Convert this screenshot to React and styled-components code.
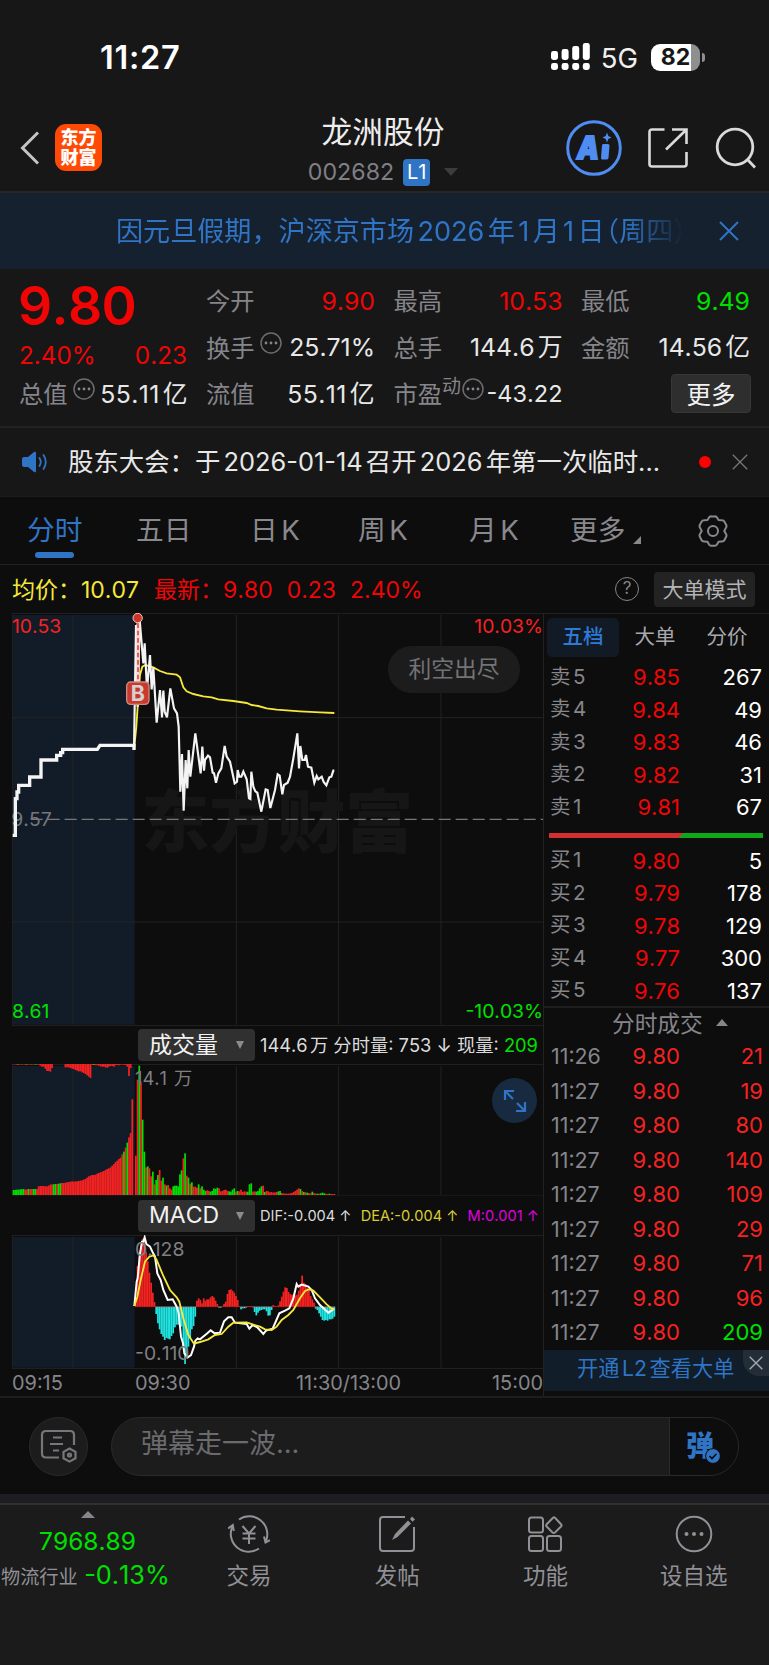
import styled, { createGlobalStyle } from "styled-components";

const RED = "#f00505";
const GREEN = "#00e000";
const BLUE = "#2f74c5";
const GREY = "#85858b";
const BAR_RED = "#f52222";
const CYAN = "#1fe3e0";

// all three charts share one x axis: 3 units per pixel, 36 = left edge
const AXIS_X = [219, 709, 1016, 1323];
const MINUTE = 5.09;

const priceLine = "38,706 46,706 46,596 51,596 51,576 56,576 56,556 89,556 89,531 123,531 123,480 170,480 170,466 182,466 182,458 188,458 188,448 292,448 300,436 402,436 402,450";
const tradeLine = "402,450 408,75 413,320 419,60 430,190 434,130 441,268 450,165 455,268 460,203 470,368 480,270 486,352 490,272 494,335 501,352 511,265 522,325 531,340 536,380 541,575 546,462 551,632 557,480 562,565 566,450 571,530 586,400 602,520 607,440 612,512 615,480 624,467 630,472 638,518 642,520 648,548 655,520 664,505 674,438 680,470 690,485 704,550 711,545 713,510 718,530 724,530 730,515 740,538 747,595 751,597 754,515 760,560 766,574 772,578 784,635 797,568 803,570 811,624 825,570 833,523 839,527 847,583 852,555 863,548 870,530 880,475 892,400 897,505 901,438 907,480 914,480 918,465 924,500 934,503 943,548 950,528 955,538 965,530 971,546 979,556 988,532 994,530 1000,512 1003,512";
const averageLine = "402,450 409,380 413,320 420,225 427,200 436,195 460,202 480,213 500,220 530,224 540,232 550,262 560,274 580,282 610,289 635,292 655,298 700,303 740,309 755,315 775,318 800,325 830,329 900,334 960,337 1003,339";

const difLine = "403,738 410,665 413,655 420,580 426,545 430,545 434,532 439,552 450,560 457,575 465,590 472,640 482,660 490,690 503,720 518,718 530,740 536,760 543,830 549,850 553,880 563,892 573,885 582,860 586,842 593,835 600,838 622,820 632,811 644,820 660,818 672,784 685,772 695,772 705,788 740,792 748,806 758,795 772,802 790,822 798,812 818,806 838,760 855,752 868,745 880,715 890,672 895,680 905,674 925,680 935,690 945,715 960,735 985,758 1002,747";
const deaLine = "403,738 412,710 422,660 435,605 448,590 460,586 470,600 490,648 510,690 530,712 538,725 550,775 565,825 582,851 600,846 625,838 645,825 665,822 685,800 700,788 740,787 760,794 780,800 795,808 815,810 830,800 845,780 865,765 880,750 900,715 915,693 928,688 940,692 960,712 980,733 995,746 1003,747";

const auction = [15,15,16,16,17,17,18,16,17,18,18,18,18,18,18,26,27,27,27,26,26,28,31,32,32,33,33,34,35,36,36,37,38,39,40,41,40,41,41,42,43,44,46,48,52,56,58,60,60,61,64,66,68,70,72,75,78,80,83,88,93,99,103,108,112,122,130,142,157,173,186,287];
const auctionGreen = [0,1,2,3,4,5,6,9,12,13,24,25,27,28,66,68];
const unmatched = [1,1,2,2,1,2,1,2,2,1,2,2,1,2,2,2,5,8,8,14,21,21,23,12,0,0,0,0,0,0,0,10,10,10,12,14,15,18,20,22,22,25,27,30,34,38,42,3,3,4,4,5,7,8,8,10,11,8,6,6,8,4,3,4,2,2,2,3,8,36,12,0];

// minute volume, negative = green bar
const volume = [118,346,-388,340,-226,-130,83,-86,80,56,-70,32,-45,-60,75,43,-52,32,-28,30,20,16,-26,-28,-28,-26,-62,-74,110,-125,58,-52,34,-38,25,25,22,-32,20,-26,-16,-12,14,12,-10,-12,-20,-18,-22,20,11,12,15,16,12,-11,-10,-16,-20,10,-12,11,16,9,11,10,-10,-32,-35,10,11,-10,-12,-20,-26,28,-9,12,11,8,9,7,8,9,-11,-12,6,5,4,4,4,5,6,9,12,16,20,-18,12,-9,8,-7,6,5,-10,6,4,-4,4,-5,-7,-5,4,3,-4,3,3,3];

const macd = [20,122,150,180,203,200,165,136,102,72,42,14,-22,-50,-68,-82,-90,-100,-94,-96,-98,-88,-80,-62,-54,-54,-54,-60,-118,-172,-150,-120,-95,-68,-58,-30,18,25,20,10,25,18,22,22,28,32,28,18,8,-3,-3,2,8,15,38,50,52,48,42,32,20,2,-8,-5,-5,-3,2,2,2,-2,-16,-26,-18,-12,-10,-8,-8,-14,-27,-26,-10,5,2,1,4,16,30,45,58,56,44,38,36,34,34,36,48,68,93,72,68,56,48,32,22,12,-6,-10,-20,-30,-40,-42,-40,-42,-38,-38,-36,-30,-18,-8];

const sells = [["卖5", "9.85", "267"], ["卖4", "9.84", "49"], ["卖3", "9.83", "46"], ["卖2", "9.82", "31"], ["卖1", "9.81", "67"]];
const buys = [["买1", "9.80", "5"], ["买2", "9.79", "178"], ["买3", "9.78", "129"], ["买4", "9.77", "300"], ["买5", "9.76", "137"]];
const trades = [["11:26", "21"], ["11:27", "19"], ["11:27", "80"], ["11:27", "140"], ["11:27", "109"], ["11:27", "29"], ["11:27", "71"], ["11:27", "96"], ["11:27", "209"]];

export default function App() {
    return (
        <>
            <GlobalStyle />
            <Screen>
                <StatusBar />
                <Header />
                <Banner>
                    <BannerText>因元旦假期，沪深京市场2026年1月1日<Bracket>（</Bracket>周四）</BannerText>
                    <Cross size={20} color={BLUE} width={2} />
                </Banner>
                <Quote />
                <News>
                    <Speaker />
                    <NewsText>股东大会：于2026-01-14召开2026年第一次临时...</NewsText>
                    <RedDot />
                    <Cross size={16} color="#77777c" width={1.6} />
                </News>
                <Tabs />
                <Summary />
                <Market>
                    <Charts />
                    <OrderBook />
                </Market>
                <CommentBar />
                <BottomNav />
            </Screen>
        </>
    )
}

function StatusBar() {
    return (
        <Status>
            <Clock>11:27</Clock>
            <StatusRight>
                <svg width="39" height="28" viewBox="0 0 39 28" fill="#fff">
                    {[8, 6, 3, 0].map((y, i) => (
                        <g key={i}>
                            <rect x={i * 10.6} y={y} width="7" height={17 - y} rx="2.4" />
                            <rect x={i * 10.6} y="20" width="7" height="7" rx="2.4" />
                        </g>
                    ))}
                </svg>
                <Network>5G</Network>
                <Battery><b>82</b></Battery>
                <BatteryTip />
            </StatusRight>
        </Status>
    )
}

function Header() {
    return (
        <Top>
            <TopSide>
                <svg width="20" height="34" viewBox="0 0 20 34" fill="none" stroke="#c4c4c6" strokeWidth="3">
                    <path d="M18 1.5 2.5 17 18 32.5" />
                </svg>
                <Logo><span>东方</span><span>财富</span></Logo>
            </TopSide>
            <TitleBlock>
                <h1>龙洲股份</h1>
                <Code>
                    002682 <Level>L1</Level>
                    <svg width="14" height="8"><path d="M0 0h14L7 8z" fill="#3c3c3e" /></svg>
                </Code>
            </TitleBlock>
            <TopSide $end>
                <svg width="56" height="56" viewBox="0 0 56 56">
                    <circle cx="28" cy="28" r="26.3" fill="none" stroke="#4f8df2" strokeWidth="3" />
                    <text x="11" y="38.5" fill="#4f8df2" stroke="#4f8df2" strokeWidth="1.8" fontFamily="Inter" fontWeight="900" fontSize="31" fontStyle="italic" textLength="22" lengthAdjust="spacingAndGlyphs">A</text>
                    <path d="M37.5 25.5h4.500L41 38H36.500z" fill="#4f8df2" stroke="#4f8df2" strokeWidth="3" strokeLinejoin="round" />
                    <path d="M41 12.500 42.300 16l3.200 1.500-3.200 1.500-1.300 3.500-1.300-3.500-3.200-1.500 3.200-1.500z" fill="#4f8df2" />
                </svg>
                <svg width="42" height="42" viewBox="0 0 42 42" fill="none" stroke="#dadada" strokeWidth="2.6">
                    <path d="M17.500 2.500H5Q2.500 2.500 2.500 5v32Q2.500 39.500 5 39.500h32Q39.500 39.500 39.500 37V25M25 2.500h14.500V17M39 3 19 22.500" />
                </svg>
                <svg width="42" height="42" viewBox="0 0 42 42" fill="none" stroke="#dadada" strokeWidth="2.8">
                    <circle cx="21" cy="20" r="17.800" />
                    <path d="m33 32 8 8.500" />
                </svg>
            </TopSide>
        </Top>
    )
}

function Quote() {
    return (
        <QuoteBox>
            <PriceColumn>
                <Price>9.80</Price>
                <Change><span>2.40%</span><span>0.23</span></Change>
                <Cell><label>总值</label><Dots /><Value $wide>55.11亿</Value></Cell>
            </PriceColumn>
            <Cells>
                <Cell><label>今开</label><Value $color={RED}>9.90</Value></Cell>
                <Cell><label>最高</label><Value $color={RED}>10.53</Value></Cell>
                <Cell><label>最低</label><Value $color={GREEN}>9.49</Value></Cell>
                <Cell><label>换手</label><Dots /><Value>25.71%</Value></Cell>
                <Cell><label>总手</label><Value>144.6万</Value></Cell>
                <Cell><label>金额</label><Value>14.56亿</Value></Cell>
                <Cell><label>流值</label><Value $wide>55.11亿</Value></Cell>
                <Cell><label>市盈</label><Sup>动</Sup><Dots $tight /><Value $small>-43.22</Value></Cell>
                <Cell><MoreButton>更多</MoreButton></Cell>
            </Cells>
        </QuoteBox>
    )
}

function Dots({ $tight }) {
    return (
        <DotsIcon $tight={$tight} viewBox="0 0 22 22">
            <circle cx="11" cy="11" r="10" fill="none" stroke="#6c6c70" strokeWidth="1.500" />
            <g fill="#85858b"><circle cx="6" cy="11" r="1.400" /><circle cx="11" cy="11" r="1.400" /><circle cx="16" cy="11" r="1.400" /></g>
        </DotsIcon>
    )
}

function Cross({ size, color, width }) {
    return (
        <svg width={size} height={size} viewBox="0 0 20 20" stroke={color} strokeWidth={width}>
            <path d="m1 1 18 18M19 1 1 19" />
        </svg>
    )
}

function Speaker() {
    return (
        <svg width="26" height="22" viewBox="0 0 26 22" fill="none" stroke={BLUE} strokeWidth="1.800" strokeLinecap="round">
            <path d="M0 8Q0 6 2 6h4l6-5q2-1 2 1v18q0 2-2 1l-6-5H2q-2 0-2-2z" fill={BLUE} stroke="none" />
            <path d="M17.500 7q2.500 4 0 8M21.500 4q4.500 7 0 14" />
        </svg>
    )
}

function Tabs() {
    return (
        <TabBar>
            <Tab $active>分时</Tab>
            <Tab>五日</Tab>
            <Tab>日K</Tab>
            <Tab>周K</Tab>
            <Tab>月K</Tab>
            <Tab>更多<Corner /></Tab>
            <svg width="32" height="32" viewBox="0 0 32 32" fill="none" stroke="#88888e" strokeWidth="2" strokeLinejoin="round">
                <path d="M12 2.500q1-1.500 2.500-1h3q1.500-.5 2.500 1l1.500 2.500 3.500.2q1.800 0 2.500 1.600l1.500 2.800q1 1.600 0 3L27.300 16l1.700 3q1 1.500 0 3l-1.500 3q-.7 1.500-2.500 1.500l-3.500.2L20 29.500q-1 1.500-2.500 1.200h-3q-1.500.3-2.500-1.200l-1.500-2.800-3.500-.2q-1.800 0-2.500-1.500L3 22q-1-1.500 0-3l1.700-3L3 12.600q-1-1.400 0-3l1.500-2.800Q5.200 5.200 7 5.200L10.500 5z" />
                <circle cx="16" cy="16" r="5" />
            </svg>
        </TabBar>
    )
}

function Summary() {
    return (
        <SummaryRow>
            <Stat $color="#f5e83a">均价：<b>10.07</b></Stat>
            <Stat $color={RED}>最新：<b>9.80</b><b>0.23</b><b>2.40%</b></Stat>
            <Help>?</Help>
            <ModeButton>大单模式</ModeButton>
        </SummaryRow>
    )
}

function Grid({ top, bottom, rows = [] }) {
    return (
        <>
            <rect x="38" y={top + 6} width="366" height={bottom - top - 10} fill="#121c28" />
            <g stroke="#232323" strokeWidth="3">
                {AXIS_X.map((x) => <path key={x} d={`M${x} ${top + 6}V${bottom - 4}`} />)}
                {rows.map((y) => <path key={y} d={`M36 ${y}H1629`} />)}
                <path d={`M37 ${top}V${bottom}M36 ${top + 1}H1629M36 ${bottom - 1}H1629`} />
            </g>
        </>
    )
}

function Charts() {
    return (
        <ChartColumn>
            <ChartArea>
                <Plot $height={413} viewBox="36 39 1593 1239">
                    <Grid top={39} bottom={1278} rows={[353, 966]} />
                    <PlotText x="424" y="740" $size={204} $color="#161616" fontWeight="900" textLength="816">东方财富</PlotText>
                    <path d="M92 658H1629" stroke="#77777b" strokeWidth="3.500" strokeDasharray="36 15" />
                    <PlotText x="34" y="677" $color="#77777b">9.57</PlotText>
                    <polyline points={averageLine} fill="none" stroke="#f5e83a" strokeWidth="5.500" />
                    <polyline points={priceLine} fill="none" stroke="#f4f4f4" strokeWidth="10" />
                    <polyline points={tradeLine} fill="none" stroke="#f4f4f4" strokeWidth="6.500" />
                    <PlotText x="36" y="98">10.53</PlotText>
                    <PlotText x="1629" y="98" textAnchor="end">10.03%</PlotText>
                    <PlotText x="36" y="1253" $color={GREEN}>8.61</PlotText>
                    <PlotText x="1629" y="1253" textAnchor="end" $color={GREEN}>-10.03%</PlotText>
                    <path d="M414 70V246" stroke="#f2dada" strokeWidth="10" />
                    <path d="M414 70V246" stroke="#ef5b50" strokeWidth="6" strokeDasharray="14 8" />
                    <circle cx="413" cy="54" r="14" fill="#cf3325" stroke="#e8c9c6" strokeWidth="3" />
                    <rect x="380" y="246" width="67" height="67" rx="12" fill="#c93a2d" stroke="#cf8b84" strokeWidth="4" />
                    <PlotText x="413.500" y="302" textAnchor="middle" $color="#d6d0d0" $size={64} fontWeight="700">B</PlotText>
                </Plot>
                <Hint>利空出尽</Hint>
            </ChartArea>
            <IndicatorRow $height={38}>
                <Picker>成交量<Arrow /></Picker>
                <Figures>
                    <span>144.6万 分时量: 753 ↓ 现量: <Up>209</Up></span>
                </Figures>
            </IndicatorRow>
            <ChartArea>
                <Plot $height={132} viewBox="36 12 1593 396">
                    <Grid top={12} bottom={409} />
                    {auction.map((h, i) => (
                        <g key={i}>
                            <rect x={38 + i * 5.02} y={405 - h} width="5.200" height={h} fill={auctionGreen.includes(i) ? GREEN : BAR_RED} />
                            <rect x={38 + i * 5.02} y="12" width="5.200" height={unmatched[i]} fill={i % 5 === 3 && unmatched[i] < 4 ? GREEN : BAR_RED} />
                        </g>
                    ))}
                    {volume.map((v, i) => (
                        <rect key={i} x={405 + i * MINUTE} y={405 - Math.abs(v)} width="5.200" height={Math.abs(v)} fill={v < 0 ? GREEN : BAR_RED} />
                    ))}
                    <PlotText x="405" y="76" $size={55} $color="#7f7f84">14.1万</PlotText>
                </Plot>
                <Expand>
                    <svg width="24" height="24" viewBox="0 0 24 24" fill="none" stroke={BLUE} strokeWidth="2.200">
                        <path d="M2 11V2h9M2 2l8 8M22 13v9h-9M22 22l-8-8" />
                    </svg>
                </Expand>
            </ChartArea>
            <IndicatorRow $height={39}>
                <Picker>MACD<Arrow /></Picker>
                <Figures $small>
                    <span>DIF:-0.004 ↑</span>
                    <Dea>DEA:-0.004 ↑</Dea>
                    <Hist>M:0.001 ↑</Hist>
                </Figures>
            </IndicatorRow>
            <Plot $height={134} viewBox="36 525 1593 402">
                <Grid top={525} bottom={927} />
                {macd.slice(0, 118).map((v, i) => (
                    <rect key={i} x={405 + i * MINUTE} y={v > 0 ? 740 - v : 740} width="5.200" height={Math.abs(v)} fill={v > 0 ? BAR_RED : CYAN} />
                ))}
                <path d="M405 740H1005" stroke={BAR_RED} strokeWidth="1.500" />
                <polyline points={difLine} fill="none" stroke="#fff" strokeWidth="6" />
                <polyline points={deaLine} fill="none" stroke="#f5e83a" strokeWidth="5.500" />
                <PlotText x="405" y="589" $color="#7f7f84">0.128</PlotText>
                <PlotText x="405" y="900" $color="#7f7f84">-0.110</PlotText>
            </Plot>
            <TimeAxis>
                <span>09:15</span>
                <span>09:30</span>
                <span>11:30/13:00</span>
                <span>15:00</span>
            </TimeAxis>
        </ChartColumn>
    )
}

function OrderBook() {
    return (
        <Book>
            <BookTabs>
                <BookTab $active>五档</BookTab>
                <BookTab>大单</BookTab>
                <BookTab>分价</BookTab>
            </BookTabs>
            {sells.map(([name, price, count]) => (
                <Level5 key={name}><span>{name}</span><i>{price}</i><b>{count}</b></Level5>
            ))}
            <Ratio />
            {buys.map(([name, price, count]) => (
                <Level5 key={name}><span>{name}</span><i>{price}</i><b>{count}</b></Level5>
            ))}
            <TradesTitle>
                分时成交
                <svg width="12" height="7"><path d="M0 7h12L6 0z" fill="#85858b" /></svg>
            </TradesTitle>
            {trades.map(([time, count], i) => (
                <Trade key={i} $sell={i === 8}><span>{time}</span><i>9.80</i><b>{count}</b></Trade>
            ))}
            <Promo>
                开通L2查看大单
                <PromoClose><Cross size={14} color="#a5a9ae" width={2} /></PromoClose>
            </Promo>
        </Book>
    )
}

function CommentBar() {
    return (
        <Comment>
            <RoundButton>
                <svg width="38" height="34" viewBox="0 0 38 34" fill="none" stroke="#77777b" strokeWidth="2.200">
                    <path d="M19 28.500H6Q2 28.500 2 24.500V6Q2 2 6 2h24q4 0 4 4v10M13 8.500h9M10 15h13M13 21.500h6" />
                    <path d="m29.500 19.500 6 3.300v6.500l-6 3.300-6-3.300v-6.500z" />
                    <circle cx="29.500" cy="26" r="1.500" />
                </svg>
            </RoundButton>
            <Field>
                <Placeholder>弹幕走一波...</Placeholder>
                <Danmu>
                    <b>弹</b>
                    <svg width="16" height="16" viewBox="0 0 16 16">
                        <circle cx="8" cy="8" r="7.400" fill={BLUE} stroke="#0d0d0d" />
                        <path d="m4.500 8 2.500 2.600 4.500-4.800" fill="none" stroke="#0d0d0d" strokeWidth="1.600" />
                    </svg>
                </Danmu>
            </Field>
        </Comment>
    )
}

function BottomNav() {
    return (
        <Nav>
            <IndexItem>
                <svg width="14" height="7"><path d="M0 7h14L7 0z" fill="#85858b" /></svg>
                <strong>7968.89</strong>
                <p>物流行业 <em>-0.13%</em></p>
            </IndexItem>
            <NavItem>
                <svg width="42" height="38" viewBox="0 0 42 38" fill="none" stroke="#909096" strokeWidth="2">
                    <path d="M11 4.500A18 18 0 0 1 38 26M31 33.500A18 18 0 0 1 4.500 11M0 13.500l4.800-3.500 1 6M42 25l-4.500 2.500-1.500-6" />
                    <path d="m14.500 11 6.500 7.500 6.500-7.500M21 18.500V29M14.500 18.500h13M14.500 23.500h13" />
                </svg>
                交易
            </NavItem>
            <NavItem>
                <svg width="38" height="38" viewBox="0 0 38 38" fill="none" stroke="#909096" strokeWidth="2">
                    <path d="M27 2H5Q2 2 2 5v28q0 3 3 3h28q3 0 3-3V12" />
                    <path d="m14 25 3-6L30 5.500l3 3L19.500 22z" fill="#909096" stroke="none" />
                    <path d="m32 4 2-2.500 3 3-2.500 2.200z" fill="#909096" stroke="none" />
                </svg>
                发帖
            </NavItem>
            <NavItem>
                <svg width="36" height="38" viewBox="0 0 36 38" fill="none" stroke="#909096" strokeWidth="2">
                    <rect x="2" y="2.500" width="14" height="15" rx="2.500" />
                    <rect x="2" y="21" width="14" height="15" rx="2.500" />
                    <rect x="20" y="21" width="14" height="15" rx="2.500" />
                    <path d="m26 2.700-6.300 6.500q-1 1.200 0 2.300l5.800 6q1.300 1 2.500 0l6-6q1-1.100 0-2.300L28 2.700q-1-.8-2 0z" />
                </svg>
                功能
            </NavItem>
            <NavItem>
                <svg width="38" height="38" viewBox="0 0 38 38" fill="none" stroke="#909096" strokeWidth="2">
                    <circle cx="19" cy="19" r="17.300" />
                    <g fill="#909096" stroke="none"><circle cx="11.500" cy="19" r="2" /><circle cx="19" cy="19" r="2" /><circle cx="26.500" cy="19" r="2" /></g>
                </svg>
                设自选
            </NavItem>
        </Nav>
    )
}

const GlobalStyle = createGlobalStyle`
    * {
        box-sizing: border-box;
    }

    body {
        margin: 0;
        background: #0d0d0d;
        font-family: Inter, "Noto Sans CJK SC", sans-serif;
        font-kerning: none;
        text-autospace: normal;
    }

    svg {
        display: block;
        flex-shrink: 0;
    }

    h1, p {
        margin: 0;
    }
`

const Screen = styled.div`
    width: 769px;
    height: 1665px;
    overflow: hidden;
    display: flex;
    flex-direction: column;
    background: #0d0d0d;
    color: #e8e8e8;
    white-space: nowrap;

    > * {
        flex-shrink: 0;
    }
`

const Status = styled.div`
    height: 96px;
    padding: 18px 64px 0 100px;
    display: flex;
    align-items: center;
    justify-content: space-between;
    background: #171717;
`

const Clock = styled.div`
    font-size: 32.5px;
    font-weight: 600;
    letter-spacing: 0.7px;
    padding-top: 1px;
    color: #fff;
`

const StatusRight = styled.div`
    display: flex;
    align-items: center;
`

const Network = styled.div`
    margin: 2px 13px 0 11px;
    font-size: 27.5px;
    color: #f0f0f0;
`

const Battery = styled.div`
    width: 49px;
    height: 27px;
    border-radius: 9px;
    display: flex;
    align-items: center;
    justify-content: center;
    background: linear-gradient(90deg, #fff 82%, #8f8f8f 82%);
    color: #171717;

    b {
        font-size: 23px;
        font-weight: 700;
    }
`

const BatteryTip = styled.div`
    width: 3px;
    height: 9px;
    margin-left: 2px;
    border-radius: 0 3px 3px 0;
    background: #8f8f8f;
`

const Top = styled.header`
    height: 97px;
    padding: 0 13px 0 20px;
    display: grid;
    grid-template-columns: 1fr auto 1fr;
    align-items: center;
    background: #171717;
    border-bottom: 2px solid #262626;
`

const TopSide = styled.div`
    display: flex;
    align-items: center;
    gap: ${(props) => (props.$end ? "25px" : "15px")};
    justify-content: ${(props) => (props.$end ? "flex-end" : "flex-start")};
    padding-top: 8px;
`

const Logo = styled.div`
    width: 47px;
    height: 47px;
    border-radius: 11px;
    background: #ff4a05;
    color: #fff;
    display: flex;
    flex-direction: column;
    align-items: center;
    justify-content: center;

    span {
        font-size: 18px;
        line-height: 20px;
        font-weight: 900;
    }
`

const TitleBlock = styled.div`
    display: flex;
    flex-direction: column;
    align-items: center;
    padding: 10px 10px 0 0;

    h1 {
        font-size: 30.7px;
        line-height: 40px;
        font-weight: 400;
        color: #ededed;
    }
`

const Code = styled.div`
    display: flex;
    align-items: center;
    gap: 9px;
    height: 34px;
    padding-top: 7px;
    font-size: 23.2px;
    color: #7f7f85;

    svg {
        margin-left: 5px;
    }
`

const Level = styled.span`
    width: 27px;
    height: 27px;
    border-radius: 4px;
    display: flex;
    align-items: center;
    justify-content: center;
    background: ${BLUE};
    color: #fff;
    font-size: 20px;
`

const Banner = styled.div`
    height: 76px;
    padding: 0 30px 0 116px;
    display: flex;
    align-items: center;
    justify-content: space-between;
    background: #162130;
`

const BannerText = styled.div`
    width: 585px;
    padding-bottom: 4px;
    font-size: 27.1px;
    color: ${BLUE};
    mask-image: linear-gradient(90deg, #000 87%, transparent 97%);
`

const Bracket = styled.span`
    margin-left: 1px;
    font-feature-settings: "halt";
`

const QuoteBox = styled.section`
    height: 159px;
    padding: 9px 19px 0;
    display: flex;
    gap: 19px;
    background: #171717;
    border-bottom: 2px solid #222;
`

const PriceColumn = styled.div`
    width: 168px;
`

const Price = styled.div`
    height: 55px;
    margin-left: -1px;
    line-height: 55px;
    font-size: 53.5px;
    font-weight: 600;
    letter-spacing: -0.7px;
    color: ${RED};
`

const Change = styled.div`
    height: 38px;
    padding-top: 6px;
    display: flex;
    justify-content: space-between;
    align-items: center;
    font-size: 24.3px;
    color: ${RED};
`

const Cells = styled.div`
    flex: 1;
    display: grid;
    grid-template-columns: repeat(3, 168px);
    grid-auto-rows: 46.5px;
    column-gap: 19.5px;
`

const Cell = styled.div`
    height: 46.5px;
    display: flex;
    align-items: center;

    label {
        font-size: 24.3px;
        line-height: 34px;
        color: ${GREY};
    }
`

const Value = styled.span`
    margin: 0 -1px 0 auto;
    font-size: ${(props) => (props.$small ? "23.5px" : "24.8px")};
    line-height: 32px;
    padding-bottom: ${(props) => (props.$small ? "0" : "1px")};
    letter-spacing: ${(props) => (props.$wide ? "0.4px" : "0")};
    color: ${(props) => props.$color || "#e8e8e8"};
`

const DotsIcon = styled.svg`
    width: 22px;
    height: 22px;
    margin: 0 0 10px ${(props) => (props.$tight ? "1px" : "5px")};
`

const Sup = styled.sup`
    margin-bottom: 16px;
    font-size: 19px;
    line-height: 1;
    color: ${GREY};
`

const MoreButton = styled.button`
    width: 80px;
    height: 39px;
    margin: 0 -2px 2px auto;
    padding: 3px 0 0;
    border: 1px solid #373737;
    border-radius: 4px;
    background: #2e2e2e;
    color: #f2f2f2;
    font: inherit;
    font-size: 24.5px;
    line-height: 1;
`

const News = styled.div`
    height: 68px;
    padding: 0 21px 0 22px;
    display: flex;
    align-items: center;
    background: #171717;
`

const NewsText = styled.div`
    flex: 1;
    margin-left: 20px;
    padding-bottom: 4px;
    font-size: 25.4px;
`

const RedDot = styled.div`
    width: 12px;
    height: 12px;
    margin-right: 21px;
    border-radius: 50%;
    background: #f00;
`

const TabBar = styled.nav`
    height: 69px;
    padding-left: 27px;
    display: grid;
    grid-template-columns: 109px 114px 108px 111px 101px 127px 32px;
    align-items: center;
    border-top: 1px solid #1d1d1d;
    border-bottom: 1px solid #222;
`

const Tab = styled.div`
    position: relative;
    height: 67px;
    line-height: 66px;
    font-size: 27.7px;
    color: ${(props) => (props.$active ? BLUE : "#88888e")};

    &::after {
        content: "";
        display: ${(props) => (props.$active ? "block" : "none")};
        position: absolute;
        left: 8px;
        bottom: 6px;
        width: 39px;
        height: 6px;
        border-radius: 3px;
        background: ${BLUE};
    }
`

const Corner = styled.span`
    display: inline-block;
    margin-left: 8px;
    border-left: 8px solid transparent;
    border-bottom: 8px solid #88888e;
    vertical-align: -4px;
`

const SummaryRow = styled.div`
    height: 48px;
    padding: 0 14px 0 12px;
    display: flex;
    align-items: center;
`

const Stat = styled.div`
    display: flex;
    align-items: baseline;
    margin-right: 15px;
    padding-bottom: 3px;
    font-size: 23px;
    color: ${(props) => props.$color};

    b {
        font-weight: 400;
        margin-right: 14px;
    }

    b:last-child {
        margin-right: 0;
    }
`

const Help = styled.div`
    width: 24px;
    height: 24px;
    margin: 0 15px 0 auto;
    border: 1.5px solid #85858b;
    border-radius: 50%;
    font-size: 17px;
    line-height: 21px;
    text-align: center;
    color: #85858b;
`

const ModeButton = styled.button`
    width: 101px;
    height: 35px;
    padding: 0;
    border: 0;
    border-radius: 4px;
    background: #232323;
    color: #b4b4b6;
    font: inherit;
    font-size: 21px;
    line-height: 1;
`

const Market = styled.main`
    height: 785px;
    display: flex;
    border-bottom: 2px solid #1d1d1d;
`

const ChartColumn = styled.div`
    width: 544px;
    flex-shrink: 0;
    padding-left: 12px;
    border-right: 1px solid #222;
`

const ChartArea = styled.div`
    position: relative;
`

const Plot = styled.svg`
    width: 531px;
    height: ${(props) => props.$height}px;
`

const PlotText = styled.text`
    font-size: ${(props) => props.$size || 58}px;
    fill: ${(props) => props.$color || BAR_RED};
`

const Hint = styled.div`
    position: absolute;
    left: 376px;
    top: 33px;
    width: 132px;
    height: 47px;
    border-radius: 24px;
    background: #1c1c1c;
    color: #737377;
    font-size: 22.8px;
    line-height: 45px;
    text-align: center;
`

const Expand = styled.div`
    position: absolute;
    left: 480px;
    top: 14px;
    width: 45px;
    height: 45px;
    border-radius: 50%;
    display: flex;
    align-items: center;
    justify-content: center;
    background: #182a40;
`

const IndicatorRow = styled.div`
    height: ${(props) => props.$height}px;
    padding: 0 4px 0 126px;
    display: flex;
    align-items: center;
    gap: 5px;
`

const Picker = styled.div`
    width: 117px;
    height: 32px;
    padding: 0 11px;
    display: flex;
    align-items: center;
    justify-content: space-between;
    border-radius: 4px;
    background: #303030;
    color: #f2f2f2;
    font-size: 23px;
    line-height: 31px;
`

const Arrow = styled.span`
    border: 4.5px solid transparent;
    border-top: 8px solid #8c8c90;
    border-bottom: 0;
`

const Figures = styled.div`
    flex: 1;
    display: flex;
    justify-content: space-between;
    padding-bottom: ${(props) => (props.$small ? "0" : "3px")};
    font-size: ${(props) => (props.$small ? "14.6px" : "18.3px")};
    color: #dcdcdc;
`

const Up = styled.span`
    color: ${GREEN};
`

const Dea = styled.span`
    color: #d8ce34;
`

const Hist = styled.span`
    color: #e000e0;
`

const TimeAxis = styled.div`
    height: 26px;
    margin-top: 1px;
    display: grid;
    grid-template-columns: 123px 161px 1fr auto;
    align-items: center;
    font-size: 19.9px;
    color: ${GREY};
`

const Book = styled.aside`
    width: 225px;
    display: flex;
    flex-direction: column;
    border-top: 1px solid #222;
`

const BookTabs = styled.div`
    height: 47px;
    padding: 4px 6px 4px 3px;
    display: grid;
    grid-template-columns: repeat(3, 1fr);
`

const BookTab = styled.div`
    border-radius: 5px;
    background: ${(props) => (props.$active ? "#111a25" : "transparent")};
    color: ${(props) => (props.$active ? "#2f7ad6" : "#a8a8ac")};
    font-size: 20.5px;
    font-weight: ${(props) => (props.$active ? 500 : 400)};
    line-height: 38px;
    text-align: center;
`

const BookRow = styled.div`
    display: grid;
    grid-template-columns: 52px 78px 1fr;
    align-items: center;
    padding-left: 6px;
    font-size: 22px;

    span {
        color: ${GREY};
    }

    i {
        font-style: normal;
        text-align: right;
        color: ${RED};
    }

    b {
        font-weight: 400;
        text-align: right;
    }
`

const Level5 = styled(BookRow)`
    height: 32.5px;
    padding-right: 7px;

    span {
        font-size: 20.5px;
        line-height: 30px;
        padding-bottom: 1px;
    }

    b {
        color: #fff;
    }
`

const Ratio = styled.div`
    height: 5px;
    margin: 9px 6px 7px 5px;
    background: linear-gradient(135deg, #d23030 61.5%, #10a818 61.5%);
`

const TradesTitle = styled.div`
    height: 33px;
    margin-top: -1px;
    padding: 0 0 2px 68px;
    display: flex;
    align-items: center;
    gap: 13px;
    border-top: 2px solid #1e1e1e;
    font-size: 22.7px;
    color: ${GREY};
`

const Trade = styled(BookRow)`
    height: 34.5px;
    padding-right: 6px;

    span {
        padding-left: 1px;
        font-size: 21.4px;
    }

    i {
        color: ${BAR_RED};
    }

    b {
        color: ${(props) => (props.$sell ? GREEN : BAR_RED)};
    }
`

const Promo = styled.div`
    position: relative;
    height: 41px;
    padding-left: 33px;
    background: #111d29;
    color: ${BLUE};
    font-size: 21.2px;
    line-height: 37px;
`

const PromoClose = styled.div`
    position: absolute;
    right: 0;
    top: 0;
    width: 26px;
    height: 26px;
    border-bottom-left-radius: 16px;
    display: flex;
    align-items: center;
    justify-content: center;
    background: #232d38;
`

const Comment = styled.div`
    height: 96px;
    padding: 0 30px 0 29px;
    display: flex;
    align-items: center;
    gap: 23px;
`

const RoundButton = styled.div`
    width: 59px;
    height: 59px;
    border: 1px solid #2a2a2a;
    border-radius: 50%;
    display: flex;
    align-items: center;
    justify-content: center;
    background: #1c1c1c;
`

const Field = styled.div`
    flex: 1;
    height: 59px;
    border: 1px solid #2a2a2a;
    border-radius: 30px;
    overflow: hidden;
    display: flex;
    background: #1c1c1c;
`

const Placeholder = styled.div`
    flex: 1;
    padding-left: 29px;
    font-size: 27px;
    line-height: 52px;
    color: #6b6b6f;
`

const Danmu = styled.div`
    width: 69px;
    display: flex;
    align-items: center;
    padding-left: 16px;
    border-left: 1px solid #2a2a2a;
    background: #0d0d0d;
    color: ${BLUE};

    b {
        font-size: 28px;
        font-weight: 900;
        line-height: 54px;
    }

    svg {
        margin: 20px 0 0 -9px;
    }
`

const Nav = styled.footer`
    height: 171px;
    padding-top: 8px;
    display: flex;
    border-top: 9px solid #1e1d24;
    background: #1b1b1b;
    box-shadow: inset 0 2px 0 #303030;
`

const NavItem = styled.div`
    width: 148.2px;
    padding-top: 4px;
    display: flex;
    flex-direction: column;
    align-items: center;
    gap: 7px;
    font-size: 22.5px;
    line-height: 32px;
    color: #909096;
`

const IndexItem = styled.div`
    width: 175px;
    display: flex;
    flex-direction: column;
    align-items: center;

    strong {
        margin-top: 7px;
        font-size: 24.5px;
        font-weight: 400;
        line-height: 32px;
        color: ${GREEN};
    }

    p {
        width: 100%;
        padding-left: 1px;
        font-size: 19.2px;
        line-height: 36px;
        color: #909096;
    }

    em {
        margin-left: 1px;
        font-size: 25.3px;
        font-style: normal;
        color: ${GREEN};
    }
`
